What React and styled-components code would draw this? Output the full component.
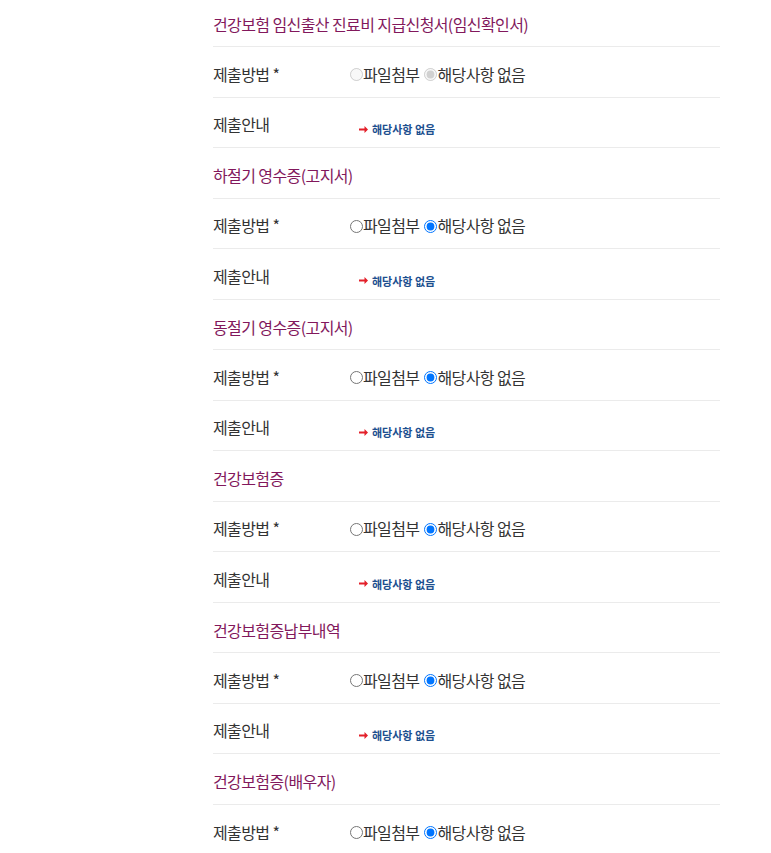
import React from "react";
import styled, { createGlobalStyle } from "styled-components";

const GlobalStyle = createGlobalStyle`
  html, body {
    margin: 0;
    padding: 0;
    background: #fff;
  }
  body {
    font-family: "Noto Sans CJK KR", "Noto Sans", sans-serif;
    color: #333;
  }
`;

const docs = [
  { title: "건강보험 임신출산 진료비 지급신청서(임신확인서)", disabled: true },
  { title: "하절기 영수증(고지서)" },
  { title: "동절기 영수증(고지서)" },
  { title: "건강보험증" },
  { title: "건강보험증납부내역" },
  { title: "건강보험증(배우자)" },
];

const App = () => {
  return (
    <>
      <GlobalStyle />
      <Page>
        {docs.map((doc, i) => (
          <Section key={doc.title}>
            <TitleRow>{doc.title}</TitleRow>
            <Row>
              <Label>제출방법 *</Label>
              <Options>
                <Option>
                  <input
                    type="radio"
                    name={`method-${i}`}
                    disabled={doc.disabled}
                  />
                  파일첨부
                </Option>
                <Option>
                  <input
                    type="radio"
                    name={`method-${i}`}
                    defaultChecked
                    disabled={doc.disabled}
                  />
                  해당사항 없음
                </Option>
              </Options>
            </Row>
            <Row>
              <Label>제출안내</Label>
              <Notice>
                <Arrow />
                해당사항 없음
              </Notice>
            </Row>
          </Section>
        ))}
      </Page>
    </>
  );
};

const Arrow = () => (
  <svg width="9" height="7" viewBox="0 0 9 7">
    <path d="M0 2.5H5.5V0L9 3.5L5.5 7V4.5H0Z" fill="#e3202a" />
  </svg>
);

const Page = styled.div`
  width: 507px;
  margin: -3.5px 0 0 213px;
`;

const Section = styled.section`
  display: flex;
  flex-direction: column;
`;

const Row = styled.div`
  display: flex;
  align-items: center;
  height: 50.53px;
  box-sizing: border-box;
  padding-top: 4px;
  border-bottom: 1px solid #ebebeb;
  font-size: 16px;
  letter-spacing: -0.6px;
`;

const TitleRow = styled(Row)`
  color: #82185c;
  padding-top: 5px;
`;

const Label = styled.div`
  width: 137px;
  flex-shrink: 0;
`;

const Options = styled.div`
  display: flex;
  align-items: center;
  gap: 5px;
`;

const Option = styled.label`
  display: inline-flex;
  align-items: center;

  input {
    width: 13px;
    height: 13px;
    margin: 2px 0 0 0;
  }
`;

const Notice = styled.div`
  display: flex;
  align-items: center;
  gap: 4px;
  margin-top: 10px;
  padding-left: 9px;
  font-size: 11px;
  font-weight: 700;
  letter-spacing: 0;
  color: #1d4f8f;
`;

export default App;
